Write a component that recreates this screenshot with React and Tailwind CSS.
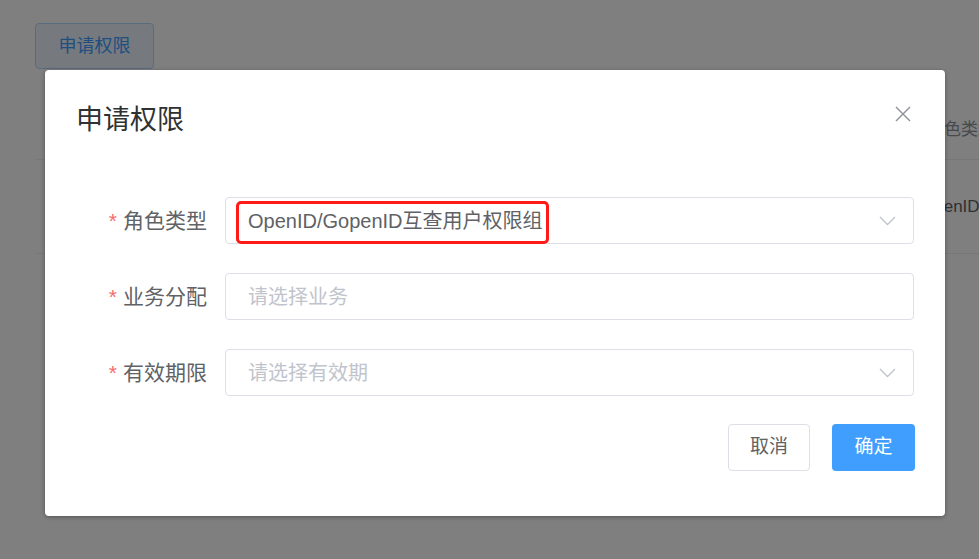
import React from "react";

function Chevron() {
  return (
    <svg width="17" height="10" viewBox="0 0 17 10" fill="none">
      <polyline points="1,1 8.5,8.5 16,1" stroke="#c0c4cc" strokeWidth="1.4" />
    </svg>
  );
}

function Row({ label, children }) {
  return (
    <div className="flex items-center h-[47px]">
      <div className="w-[162px] text-right text-[21px] leading-[30px] text-[#606266] whitespace-nowrap">
        <span className="text-[#f56c6c] mr-[6px]">*</span>
        {label}
      </div>
      <div className="relative ml-[18px] mr-[31px] flex-1 h-[47px] border border-[#dcdfe6] rounded-[4px] pl-[22px] pr-[17px] flex items-center justify-between">
        {children}
      </div>
    </div>
  );
}

export default function App() {
  return (
    <div className="relative w-[979px] h-[559px] overflow-hidden bg-white font-['Liberation_Sans','Noto_Sans_CJK_SC',sans-serif]">
      <div className="pl-[35px] pt-[23px]">
        <button className="h-[46px] w-[119px] border border-[#b3d8ff] bg-[#ecf5ff] text-[#409eff] rounded-[4px] text-[18px]">
          申请权限
        </button>
        <div className="mt-[31px]">
          <div className="h-[60px] border-b border-[#ebeef5] flex items-center">
            <div className="w-[892px] shrink-0" />
            <span className="text-[17px] text-[#909399] whitespace-nowrap">角色类型</span>
          </div>
          <div className="h-[94px] border-b border-[#ebeef5] flex items-center">
            <div className="w-[886px] shrink-0" />
            <span className="text-[17px] text-[#606266] whitespace-nowrap">OpenID/GopenID互查用户权限组</span>
          </div>
        </div>
      </div>

      <div className="absolute inset-0 bg-black/50" />

      <div className="absolute inset-0 pl-[45px] pt-[70px]">
        <div className="relative w-[900px] h-[446px] bg-white rounded-[4px] shadow-[0_1px_4px_rgba(0,0,0,0.35)]">
          <div className="pt-[32px] pl-[31px] text-[27px] leading-[36px] text-[#303133]">申请权限</div>
          <button className="absolute top-[36px] right-[34px] w-[16px] h-[16px]">
            <svg width="16" height="16" viewBox="0 0 16 16" fill="none">
              <line x1="1" y1="1" x2="15" y2="15" stroke="#909399" strokeWidth="1.4" />
              <line x1="15" y1="1" x2="1" y2="15" stroke="#909399" strokeWidth="1.4" />
            </svg>
          </button>

          <div className="mt-[59px] flex flex-col gap-[29px]">
            <Row label="角色类型">
              <span className="text-[20px] text-[#606266] whitespace-nowrap">OpenID/GopenID互查用户权限组</span>
              <Chevron />
              <div className="absolute left-[10px] top-[3px] w-[313px] h-[43px] border-[3px] border-[#ff1a1a] rounded-[5px]" />
            </Row>
            <Row label="业务分配">
              <span className="text-[20px] text-[#c0c4cc] whitespace-nowrap">请选择业务</span>
            </Row>
            <Row label="有效期限">
              <span className="text-[20px] text-[#c0c4cc] whitespace-nowrap">请选择有效期</span>
              <Chevron />
            </Row>
          </div>

          <div className="mt-[28px] flex justify-end gap-[22px] pr-[30px]">
            <button className="w-[82px] h-[47px] border border-[#dcdfe6] rounded-[4px] text-[19px] text-[#606266] bg-white">
              取消
            </button>
            <button className="w-[83px] h-[47px] rounded-[4px] text-[19px] text-white bg-[#409eff]">
              确定
            </button>
          </div>
        </div>
      </div>
    </div>
  );
}
